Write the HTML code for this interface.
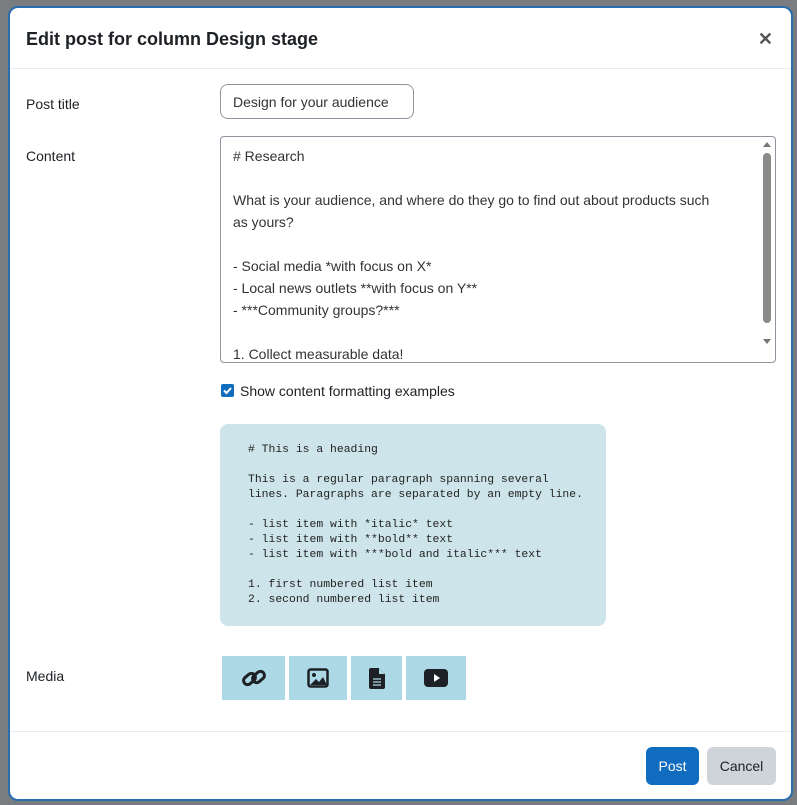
<!DOCTYPE html>
<html><head><style>
*{box-sizing:border-box;margin:0;padding:0}
body{width:797px;height:805px;background:#7a7d80;position:relative;overflow:hidden;font-family:"Liberation Sans",sans-serif;color:#1d2125}
.modal{position:absolute;left:8px;top:6px;width:785px;height:795px;background:#fff;border:2px solid #2a6db0;border-radius:10px}
.hdr{position:absolute;left:0;top:0;right:0;height:61px;border-bottom:1px solid #e8eaee}
.hdr h1{position:absolute;left:16px;top:21px;font-size:18px;font-weight:bold;color:#1d2125}
.x{position:absolute;right:18px;top:21px;font-size:18px;color:#555;font-weight:bold}
.lbl{position:absolute;left:16px;font-size:14px;color:#1d2125}
.inp{position:absolute;left:210px;top:76px;width:194px;height:35px;border:1px solid #8f959e;border-radius:8px;font-size:14px;padding:9px 12px;color:#333}
.ta{position:absolute;left:210px;top:128px;width:556px;height:227px;border:1px solid #8f959e;border-radius:4px;overflow:hidden;font-size:14px;color:#333;line-height:22px;padding:8px 64px 8px 12px}
.sb{position:absolute;right:1px;top:1px;width:14px;bottom:14px;background:#fff}
.thumb{position:absolute;left:3px;top:15px;width:8px;height:170px;background:#8a8a8a;border-radius:4px}
.chk{position:absolute;left:211px;top:376px;width:13px;height:13px;background:#0f6cbf;border-radius:2px}
.code{position:absolute;left:210px;top:416px;width:386px;height:202px;background:#cde5ea;border-radius:8px;padding:19px 28px;font-family:"Liberation Mono",monospace;font-size:11.4px;line-height:15px;white-space:pre;color:#222}
.mb{position:absolute;top:648px;height:44px;background:#add8e6;display:flex;align-items:center;justify-content:center}
.ftr{position:absolute;left:0;right:0;top:723px;border-top:1px solid #e8eaee}
.btn{position:absolute;top:739px;height:38px;border-radius:6px;font-size:14px;line-height:38px;text-align:center}
</style></head><body>
<div class="modal">
<div class="hdr"><h1>Edit post for column Design stage</h1><div class="x">✕</div></div>
<div class="lbl" style="top:88px">Post title</div>
<div class="inp">Design for your audience</div>
<div class="lbl" style="top:140px">Content</div>
<div class="ta"># Research<br><br>What is your audience, and where do they go to find out about products such<br>as yours?<br><br>- Social media *with focus on X*<br>- Local news outlets **with focus on Y**<br>- ***Community groups?***<br><br>1. Collect measurable data!
<div class="sb"><div style="position:absolute;left:3px;top:4px;border:4px solid transparent;border-bottom:5px solid #777;border-top:0"></div><div class="thumb"></div><div style="position:absolute;left:3px;bottom:4px;border:4px solid transparent;border-top:5px solid #777;border-bottom:0"></div></div></div>
<div class="chk"><svg width="13" height="13" viewBox="0 0 13 13"><path d="M3 6.5l2.5 2.5 4.5-5" stroke="#fff" stroke-width="2" fill="none"/></svg></div>
<div class="lbl" style="left:230px;top:375px;color:#1d2125">Show content formatting examples</div>
<div class="code"># This is a heading

This is a regular paragraph spanning several
lines. Paragraphs are separated by an empty line.

- list item with *italic* text
- list item with **bold** text
- list item with ***bold and italic*** text

1. first numbered list item
2. second numbered list item</div>
<div class="lbl" style="top:660px">Media</div>
<div class="mb" style="left:212px;width:63px"><svg width="28" height="24" viewBox="0 0 28 24"><g fill="none" stroke="#1d2125" stroke-width="3"><rect x="3" y="9" width="13" height="8" rx="4" transform="rotate(-40 9.5 13)"/><rect x="12" y="7" width="13" height="8" rx="4" transform="rotate(-40 18.5 11)"/></g></svg></div>
<div class="mb" style="left:279px;width:58px"><svg width="22" height="20" viewBox="0 0 22 20"><rect x="1.5" y="1.5" width="19" height="17" rx="2" fill="none" stroke="#1d2125" stroke-width="2.5"/><circle cx="7" cy="7" r="2" fill="#1d2125"/><path d="M3 17l6-6 3 3 4-5 4 8z" fill="#1d2125"/></svg></div>
<div class="mb" style="left:341px;width:51px"><svg width="16" height="21" viewBox="0 0 16 21"><path d="M2 0h8l6 6v13a2 2 0 0 1-2 2H2a2 2 0 0 1-2-2V2a2 2 0 0 1 2-2z" fill="#1d2125"/><path d="M10 0v6h6" fill="#add8e6"/><path d="M4 11h8M4 14h8M4 17h8" stroke="#add8e6" stroke-width="1.3"/></svg></div>
<div class="mb" style="left:396px;width:60px"><svg width="24" height="18" viewBox="0 0 24 18"><rect x="0" y="0" width="24" height="18" rx="4" fill="#1d2125"/><path d="M10 5l6 4-6 4z" fill="#fff"/></svg></div>
<div class="ftr"></div>
<div class="btn" style="left:636px;width:53px;background:#0f6cbf;color:#fff">Post</div>
<div class="btn" style="left:697px;width:69px;background:#ced4da;color:#1d2125">Cancel</div>
</div>
</body></html>
